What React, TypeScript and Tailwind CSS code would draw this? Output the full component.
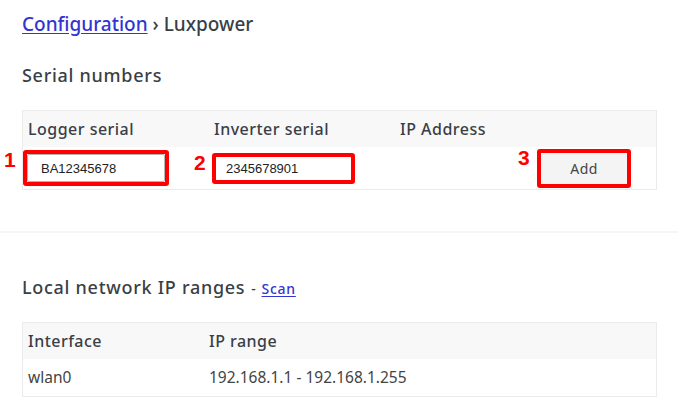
import React from 'react';

const font = { fontFamily: '"Noto Sans", "Open Sans", sans-serif' };

function Marker({ n, className }: { n: string; className: string }) {
  return (
    <span
      className={`absolute text-[21px] font-bold leading-none text-[#ff0000] ${className}`}
      style={{ fontFamily: '"Liberation Sans", Arial, sans-serif' }}
    >
      {n}
    </span>
  );
}

function SerialTable() {
  return (
    <div className="w-[635px] border border-[#ebebeb] text-[#3a3f47]">
      {/* header */}
      <div className="flex h-[36px] items-center bg-[#f8f8f8] text-[16px] font-medium tracking-[0.03em]">
        <div className="w-[186px] pl-[5px]">Logger serial</div>
        <div className="w-[186px] pl-[5px]">Inverter serial</div>
        <div className="w-[140px] pl-[5px]">IP Address</div>
        <div className="flex-1" />
      </div>
      {/* row */}
      <div className="flex h-[42px] items-center bg-white">
        <div className="w-[186px] pl-[4px]">
          <div className="relative h-[28px] w-[138px]">
            <input
              readOnly
              value="BA12345678"
              className="h-full w-full rounded-[2px] border border-[#b4b4b4] bg-white pl-[13px] text-[13px] text-[#222] outline-none"
              style={{ fontFamily: '"Liberation Sans", Arial, sans-serif' }}
            />
            <div className="pointer-events-none absolute -inset-[4px] rounded-[3px] border-4 border-[#ff0000]" />
          </div>
        </div>
        <div className="w-[186px] pl-[4px]">
          <div className="relative h-[28px] w-[138px]">
            <input
              readOnly
              value="2345678901"
              className="h-full w-full bg-white pl-[13px] text-[13px] text-[#222] outline-none"
              style={{ fontFamily: '"Liberation Sans", Arial, sans-serif' }}
            />
            <div className="pointer-events-none absolute -bottom-[2px] -left-[1px] -right-[4px] -top-[1px] rounded-[3px] border-4 border-[#ff0000]" />
          </div>
        </div>
        <div className="w-[140px]" />
        <div className="flex-1 pl-[6px]">
          <div className="relative h-[31px] w-[86px]">
            <button className="h-full w-full rounded-[2px] bg-[#f4f4f4] text-[14px] tracking-[0.03em] text-[#444]">Add</button>
            <div className="pointer-events-none absolute -inset-[4px] rounded-[3px] border-4 border-[#ff0000]" />
          </div>
        </div>
      </div>
    </div>
  );
}

function RangeTable() {
  return (
    <div className="w-[635px] border border-[#ebebeb] text-[#3a3f47]">
      <div className="flex h-[36px] items-center bg-[#f8f8f8] text-[16px] font-medium tracking-[0.03em]">
        <div className="w-[181px] pl-[5px]">Interface</div>
        <div className="flex-1 pl-[5px]">IP range</div>
      </div>
      <div className="flex h-[37px] items-center bg-white text-[15.5px] text-[#444]">
        <div className="w-[181px] pl-[5px]">wlan0</div>
        <div className="flex-1 pl-[5px]">192.168.1.1 - 192.168.1.255</div>
      </div>
    </div>
  );
}

export default function App() {
  return (
    <div className="relative h-[404px] w-[678px] overflow-hidden bg-white" style={font}>
      <Marker n="1" className="left-[4px] top-[149px]" />
      <Marker n="2" className="left-[194px] top-[152px]" />
      <Marker n="3" className="left-[518px] top-[147px]" />

      <section className="px-[22px] pt-[10px]">
        <h1 className="text-[19px] font-medium leading-[28px] text-[#3a3f47]">
          <a href="#" className="text-[#3434d2] underline underline-offset-2">Configuration</a>
          <span> › Luxpower</span>
        </h1>
        <h2 className="mt-[25px] text-[18px] font-medium leading-[24px] tracking-[0.04em] text-[#3a3f47]">Serial numbers</h2>
        <div className="mt-[23px]">
          <SerialTable />
        </div>
      </section>

      <div className="mt-[41px] h-[2px] w-full bg-[#f6f6f6]" />

      <section className="px-[22px] pt-[42px]">
        <h2 className="flex items-baseline text-[18px] font-medium leading-[24px] tracking-[0.04em] text-[#3a3f47]">
          Local network IP ranges
          <span className="ml-[6px] text-[14px]">-</span>
          <a href="#" className="ml-[5px] text-[14px] text-[#3434d2] underline underline-offset-2">Scan</a>
        </h2>
        <div className="mt-[21px]">
          <RangeTable />
        </div>
      </section>
    </div>
  );
}
